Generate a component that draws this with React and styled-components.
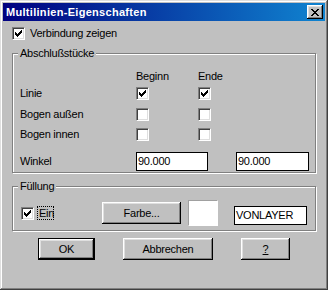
import React from 'react';
import styled, { createGlobalStyle, css } from 'styled-components';

const Global = createGlobalStyle`
  html, body { margin: 0; padding: 0; background: #c0c0c0; }
  body {
    font-family: "Liberation Sans", Arial, sans-serif;
    font-size: 11px;
    letter-spacing: -0.25px;
    color: #000;
  }
`;

const raised = css`
  box-shadow: inset -1px -1px #000, inset 1px 1px #fff, inset -2px -2px #808080, inset 2px 2px #dfdfdf;
`;

const Window = styled.div`
  width: 328px;
  height: 290px;
  box-sizing: border-box;
  padding: 3px;
  background: #c0c0c0;
  box-shadow: inset -1px -1px #404040, inset 1px 1px #dfdfdf, inset -2px -2px #808080, inset 2px 2px #fff;
  display: flex;
  flex-direction: column;
`;

const TitleBar = styled.div`
  height: 18px;
  flex: none;
  display: flex;
  align-items: center;
  justify-content: space-between;
  padding: 0 2px 0 3px;
  background: linear-gradient(to right, #000080, #1084d0);
`;

const Title = styled.span`
  color: #fff;
  font-weight: bold;
  font-size: 11px;
  letter-spacing: 0.3px;
  line-height: 18px;
`;

const CloseButton = styled.div`
  width: 16px;
  height: 14px;
  background: #c0c0c0;
  display: flex;
  align-items: center;
  justify-content: center;
  ${raised}
`;

const Body = styled.div`
  padding: 6px 9px 0 9px;
  display: flex;
  flex-direction: column;
`;

const CheckRow = styled.div`
  display: flex;
  align-items: center;
  gap: 5px;
  line-height: 13px;
`;

const Box = styled.span`
  display: inline-flex;
  align-items: center;
  justify-content: center;
  flex: none;
  width: 13px;
  height: 13px;
  box-sizing: border-box;
  background: #fff;
  border-style: solid;
  border-width: 1px;
  border-color: #808080 #fff #fff #808080;
  box-shadow: inset 1px 1px #404040, inset -1px -1px #dfdfdf;
`;

const Group = styled.div`
  position: relative;
  box-sizing: border-box;
  height: ${p => p.$h}px;
  margin-top: 13px;
  border: 1px solid #808080;
  box-shadow: 1px 1px 0 #fff, inset 1px 1px 0 #fff;
`;

const Legend = styled.span`
  position: absolute;
  top: -7px;
  left: 5px;
  padding: 0 2px;
  background: #c0c0c0;
  line-height: 13px;
`;

const EndGrid = styled.div`
  display: grid;
  grid-template-columns: 116px 62px 1fr;
  grid-template-rows: 17px 21px 20px 24px 19px;
  padding: 16px 0 0 7px;
`;

const Cell = styled.div`
  line-height: 13px;
  align-self: ${p => (p.$center ? 'center' : 'start')};
  display: flex;
`;

const FieldPair = styled.div`
  grid-column: 2 / span 2;
  display: flex;
  gap: 28px;
`;

const Field = styled.div`
  width: ${p => p.$w}px;
  height: 19px;
  box-sizing: border-box;
  background: #fff;
  border: 1px solid #000;
  padding-left: 1px;
  line-height: 17px;
  margin-top: ${p => p.$mt || 0}px;
  margin-left: ${p => p.$ml || 0}px;
  flex: none;
`;

const FillRow = styled.div`
  display: flex;
  align-items: center;
  padding: 10px 0 1px 8px;
  height: 100%;
  box-sizing: border-box;
`;

const FocusLabel = styled.span`
  margin-left: 3px;
  border: 1px dotted #000;
  padding: 0 0 0 1px;
  line-height: 12px;
  width: 17px;
  box-sizing: border-box;
`;

const Button = styled.button`
  width: ${p => p.$w}px;
  height: 22px;
  box-sizing: border-box;
  flex: none;
  padding: 0;
  margin: 0 0 0 ${p => p.$ml || 0}px;
  background: #c0c0c0;
  border: ${p => (p.$default ? '1px solid #000' : 'none')};
  font-family: "Liberation Sans", Arial, sans-serif;
  font-size: 11px;
  letter-spacing: -0.25px;
  color: #000;
  ${raised}
`;

const Swatch = styled.div`
  width: 30px;
  height: 26px;
  margin-left: 7px;
  box-sizing: border-box;
  background: #fff;
  border-style: solid;
  border-width: 1px;
  border-color: #a0a0a0 #fff #fff #a0a0a0;
  flex: none;
`;

const ButtonRow = styled.div`
  display: flex;
  gap: 28px;
  padding-left: 26px;
  margin-top: 7px;
`;

const Under = styled.span`
  text-decoration: underline;
`;

const Check = ({ checked }) => (
  <Box>
    {checked && (
      <svg width="7" height="7" viewBox="0 0 7 7" shapeRendering="crispEdges">
        <path
          d="M0 2h1v3H0z M1 3h1v3H1z M2 4h1v3H2z M3 3h1v3H3z M4 2h1v3H4z M5 1h1v3H5z M6 0h1v3H6z"
          fill="#000"
        />
      </svg>
    )}
  </Box>
);

const CloseGlyph = () => (
  <svg width="8" height="7" viewBox="0 0 8 7" shapeRendering="crispEdges">
    <path
      d="M0 0h2v1H0z M6 0h2v1H6z M1 1h2v1H1z M5 1h2v1H5z M2 2h4v1H2z M3 3h2v1H3z M2 4h4v1H2z M1 5h2v1H1z M5 5h2v1H5z M0 6h2v1H0z M6 6h2v1H6z"
      fill="#000"
    />
  </svg>
);

const rows = [
  { label: 'Linie', begin: true, end: true },
  { label: 'Bogen außen', begin: false, end: false },
  { label: 'Bogen innen', begin: false, end: false },
];

export default function App() {
  return (
    <>
      <Global />
      <Window>
        <TitleBar>
          <Title>Multilinien-Eigenschaften</Title>
          <CloseButton>
            <CloseGlyph />
          </CloseButton>
        </TitleBar>
        <Body>
          <CheckRow>
            <Check checked />
            <span>Verbindung zeigen</span>
          </CheckRow>

          <Group $h={120}>
            <Legend>Abschlußstücke</Legend>
            <EndGrid>
              <Cell />
              <Cell>Beginn</Cell>
              <Cell>Ende</Cell>
              {rows.map(r => (
                <React.Fragment key={r.label}>
                  <Cell>{r.label}</Cell>
                  <Cell><Check checked={r.begin} /></Cell>
                  <Cell><Check checked={r.end} /></Cell>
                </React.Fragment>
              ))}
              <Cell $center>Winkel</Cell>
              <FieldPair>
                <Field $w={72}>90.000</Field>
                <Field $w={73}>90.000</Field>
              </FieldPair>
            </EndGrid>
          </Group>

          <Group $h={45}>
            <Legend>Füllung</Legend>
            <FillRow>
              <Check checked />
              <FocusLabel>Ein</FocusLabel>
              <Button $w={79} $ml={48}>Farbe...</Button>
              <Swatch />
              <Field $w={73} $mt={4} $ml={16}>VONLAYER</Field>
            </FillRow>
          </Group>

          <ButtonRow>
            <Button $w={57} $default>OK</Button>
            <Button $w={90}>Abbrechen</Button>
            <Button $w={49}><Under>?</Under></Button>
          </ButtonRow>
        </Body>
      </Window>
    </>
  );
}
